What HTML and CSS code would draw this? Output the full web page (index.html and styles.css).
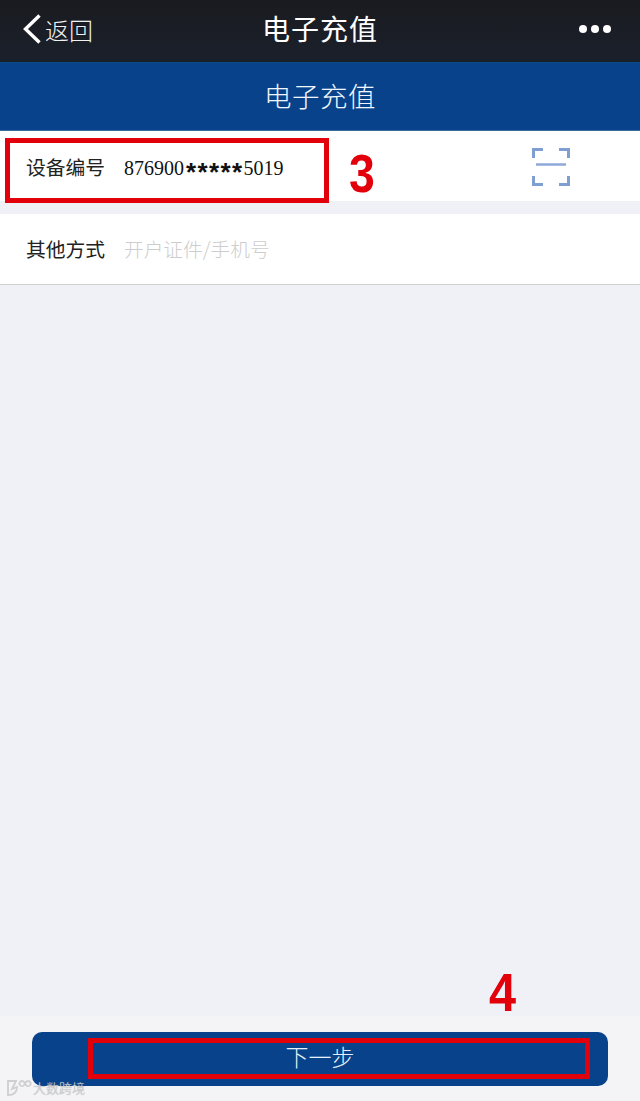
FILE: index.html
```html
<!DOCTYPE html>
<html lang="zh-CN">
<head>
  <meta charset="UTF-8">
  <meta name="viewport" content="width=device-width, initial-scale=1">
  <title>电子充值</title>
  <link rel="stylesheet" href="styles.css">
</head>
<body>
  <div class="page">
    <!-- WeChat title bar -->
    <div class="topbar">
      <div class="back">
        <svg class="back-icon" width="20" height="30" viewBox="0 0 20 30"><path d="M17.5 1.5 L3.5 15 L17.5 28.5" fill="none" stroke="#fff" stroke-width="3.4"/></svg>
        <span>返回</span>
      </div>
      <div class="topbar-title">电子充值</div>
      <div class="dots"><i></i><i></i><i></i></div>
    </div>

    <div class="banner">电子充值</div>

    <div class="row row-first">
      <span class="row-label">设备编号</span>
      <span class="row-value">876900<b>*****</b>5019</span>
      <svg class="scan" width="38" height="38" viewBox="0 0 38 38">
        <path d="M1.5 10 V1.5 H11 M27 1.5 H36.5 V10 M1.5 28 V36.5 H11 M27 36.5 H36.5 V28" fill="none" stroke="#7f9fd3" stroke-width="3"/>
        <path d="M4 16.5 H34" fill="none" stroke="#8ea8da" stroke-width="2.5"/>
      </svg>
    </div>

    <div class="row row-second">
      <span class="row-label">其他方式</span>
      <span class="row-hint">开户证件/手机号</span>
    </div>

    <div class="spacer"></div>

    <div class="footer">
      <div class="next-btn">下一步</div>
    </div>

    <!-- red annotations on top of the screenshot -->
    <div class="mark mark-box-3"></div>
    <div class="mark mark-num-3">3</div>
    <div class="mark mark-box-4"></div>
    <div class="mark mark-num-4">4</div>

    <div class="watermark">
      <svg width="26" height="18" viewBox="0 0 26 18"><path d="M2 2 L2 16 Q11 16 11 8 L6 10 L10 2 Z M16 2 a2.600 2.600 0 1 0 .1 0 M22 2 a2.600 2.600 0 1 0 .1 0" fill="none" stroke="#cfcfcf" stroke-width="1.800"/></svg>
      <span>大数跨境</span>
    </div>
  </div>
</body>
</html>
```

FILE: styles.css
```css
html, body {
  margin: 0;
  padding: 0;
  height: 100%;
}
body {
  font-family: "Noto Sans CJK SC", "Liberation Sans", sans-serif;
  background: #f0f1f6;
}
.page {
  position: relative;
  width: 640px;
  height: 1101px;
  display: flex;
  flex-direction: column;
  overflow: hidden;
}

/* Title bar */
.topbar {
  height: 62px;
  flex: none;
  display: flex;
  align-items: center;
  justify-content: space-between;
  padding: 0 29px 4px 22px;
  box-sizing: border-box;
  background: linear-gradient(#1a1b20, #1a202b);
  color: #fff;
  position: relative;
}
.back {
  display: flex;
  align-items: center;
  gap: 3px;
  font-size: 24px;
  font-weight: 300;
  color: #f2f2f2;
}
.back-icon { display: block; }
.topbar-title {
  position: absolute;
  left: 0;
  right: 0;
  top: 6px;
  text-align: center;
  font-size: 28px;
  line-height: 44px;
  font-weight: 400;
  letter-spacing: 1px;
}
.dots {
  display: flex;
  gap: 4px;
}
.dots i {
  display: block;
  width: 8px;
  height: 8px;
  border-radius: 50%;
  background: #fff;
}

.banner {
  height: 69px;
  flex: none;
  background: #07428b;
  border-top: 1px solid #0b4a85;
  box-sizing: border-box;
  border-bottom: 1px solid #3b6a9e;
  text-align: center;
  font-size: 27.5px;
  font-weight: 300;
  line-height: 65px;
  letter-spacing: 0.5px;
  color: #f0f6fc;
}

/* Form rows */
.row {
  display: flex;
  align-items: center;
  background: #fff;
  flex: none;
  padding-left: 26px;
  box-sizing: border-box;
}
.row-first {
  height: 70px;
}
.row-second {
  height: 71px;
  margin-top: 13px;
  padding-bottom: 2px;
  border-bottom: 1px solid #cfcfcf;
}
.row-label {
  width: 98px;
  font-size: 19.8px;
  color: #222;
}
.row-value {
  font-family: "Liberation Serif", serif;
  font-size: 20px;
  color: #111;
  padding-top: 4px;
}
.row-value b {
  font-family: "Liberation Sans", sans-serif;
  font-weight: 700;
  font-size: 26px;
  line-height: 0;
  letter-spacing: 1.4px;
  margin-left: 2px;
  vertical-align: -6px;
}
.row-hint {
  font-size: 19.7px;
  font-weight: 300;
  color: #cdcdcd;
}
.scan {
  margin-left: auto;
  margin-right: 70px;
  margin-top: 2px;
}

.spacer { flex: 1; }

.footer {
  flex: none;
  height: 85px;
  background: #f4f4f7;
  padding: 16px 32px 0;
  box-sizing: border-box;
}
.next-btn {
  height: 54px;
  border-radius: 10px;
  background: #07428b;
  color: #e6f0fa;
  text-align: center;
  font-size: 23px;
  font-weight: 300;
  line-height: 49px;
}

/* Annotations */
.mark { position: absolute; color: #e2000b; font-family: "Liberation Sans", sans-serif; font-weight: 700; }
.mark-box-3 {
  left: 5px;
  top: 138px;
  width: 324px;
  height: 65px;
  border: 5px solid #e2000b;
  box-sizing: border-box;
}
.mark-num-3 {
  left: 349px;
  top: 143px;
  font-size: 54px;
  line-height: 60px;
  transform: scaleX(0.86);
  transform-origin: left center;
}
.mark-box-4 {
  left: 88px;
  top: 1038px;
  width: 502px;
  height: 41px;
  border: 5px solid #e2000b;
  box-sizing: border-box;
}
.mark-num-4 {
  left: 489px;
  top: 962px;
  font-size: 54px;
  line-height: 60px;
  transform: scaleX(0.9);
  transform-origin: left center;
}

.watermark {
  position: absolute;
  left: 6px;
  top: 1079px;
  display: flex;
  align-items: center;
  gap: 1px;
  color: #d4d4d4;
  font-size: 13px;
  font-weight: 300;
  line-height: 18px;
  text-shadow: 0 0 1px #999;
}
```
